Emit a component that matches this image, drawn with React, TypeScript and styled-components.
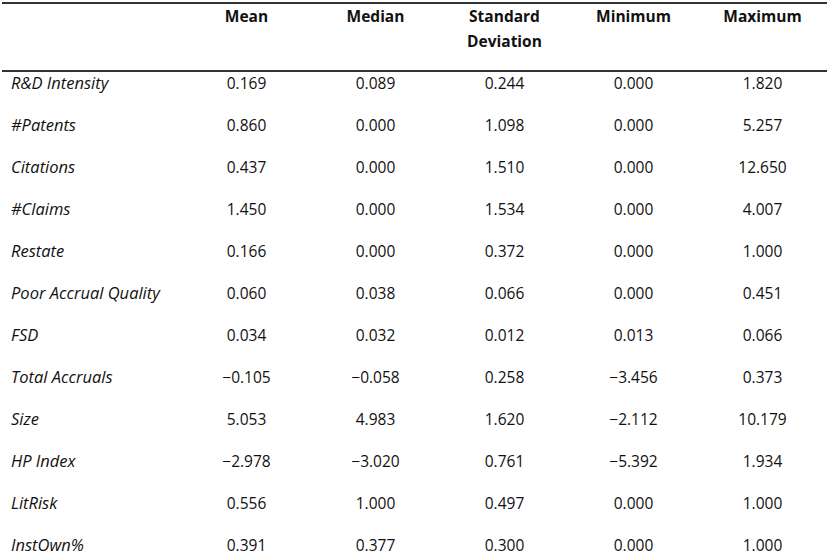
import styled, { createGlobalStyle } from 'styled-components';

type Row = {
    label: string;
    values: string[];
};

const rows: Row[] = [
    { label: 'R&D Intensity', values: ['0.169', '0.089', '0.244', '0.000', '1.820'] },
    { label: '#Patents', values: ['0.860', '0.000', '1.098', '0.000', '5.257'] },
    { label: 'Citations', values: ['0.437', '0.000', '1.510', '0.000', '12.650'] },
    { label: '#Claims', values: ['1.450', '0.000', '1.534', '0.000', '4.007'] },
    { label: 'Restate', values: ['0.166', '0.000', '0.372', '0.000', '1.000'] },
    { label: 'Poor Accrual Quality', values: ['0.060', '0.038', '0.066', '0.000', '0.451'] },
    { label: 'FSD', values: ['0.034', '0.032', '0.012', '0.013', '0.066'] },
    { label: 'Total Accruals', values: ['\u22120.105', '\u22120.058', '0.258', '\u22123.456', '0.373'] },
    { label: 'Size', values: ['5.053', '4.983', '1.620', '\u22122.112', '10.179'] },
    { label: 'HP Index', values: ['\u22122.978', '\u22123.020', '0.761', '\u22125.392', '1.934'] },
    { label: 'LitRisk', values: ['0.556', '1.000', '0.497', '0.000', '1.000'] },
    { label: 'InstOwn%', values: ['0.391', '0.377', '0.300', '0.000', '1.000'] },
];

// header labels, \n marks the line break
const headers = ['Mean', 'Median', 'Standard\nDeviation', 'Minimum', 'Maximum'];

const GlobalStyle = createGlobalStyle`
    html, body {
        margin: 0;
        padding: 0;
        background: #ffffff;
    }
    body {
        font-family: 'Open Sans', 'Liberation Sans', sans-serif;
        color: #111111;
    }
`;

const Table = styled.div`
    width: 831px;
    padding-top: 2px;
    box-sizing: border-box;
`;

const Grid = styled.div`
    display: grid;
    grid-template-columns: 180px repeat(5, 1fr);
    margin: 0 4px 0 2px;
`;

const HeadRow = styled(Grid)`
    border-top: 2px solid #333333;
    border-bottom: 2px solid #333333;
    height: 66px;
`;

const HeadCell = styled.div`
    font-size: 15.5px;
    font-weight: 700;
    line-height: 25px;
    text-align: center;
    white-space: pre-line;
`;

const BodyRow = styled(Grid)`
    height: 42px;
`;

const Cell = styled.div<{ $label?: boolean }>`
    font-size: ${(p) => (p.$label ? '16.5px' : '15.5px')};
    font-weight: 500;
    line-height: 22px;
    text-align: ${(p) => (p.$label ? 'left' : 'center')};
    font-style: ${(p) => (p.$label ? 'italic' : 'normal')};
    padding-left: ${(p) => (p.$label ? '9px' : '0')};
    white-space: nowrap;
`;

const App = () => {
    return (
        <Table>
            <GlobalStyle />
            <HeadRow>
                <div />
                {headers.map((h) => (
                    <HeadCell key={h}>{h}</HeadCell>
                ))}
            </HeadRow>
            {rows.map((r) => (
                <BodyRow key={r.label}>
                    <Cell $label>{r.label}</Cell>
                    {r.values.map((v, i) => (
                        <Cell key={i}>{v}</Cell>
                    ))}
                </BodyRow>
            ))}
        </Table>
    );
};

export default App;
